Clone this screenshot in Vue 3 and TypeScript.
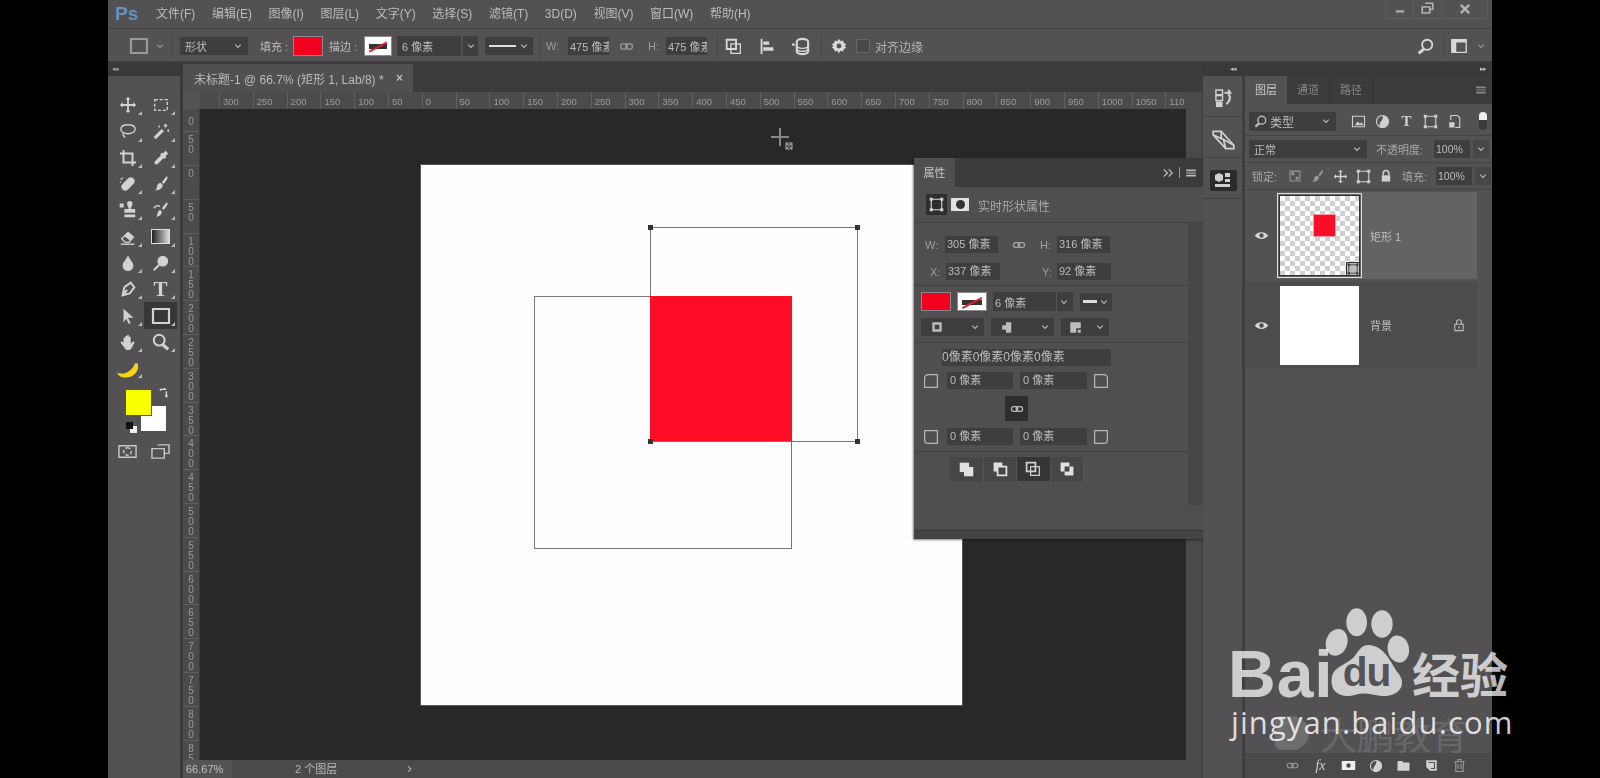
<script setup lang="ts">
import { h } from 'vue'

type Part = [string, string?]
const I: Record<string, Part[]> = {
  move: [['M10 1l3 3h-2v5h5V7l3 3-3 3v-2h-5v5h2l-3 3-3-3h2v-5H4v2l-3-3 3-3v2h5V4H7z', 'f']],
  marquee: [['M3 4h14v12H3z', 'd']],
  lasso: [['M10 3c5 0 8 2 8 5s-4 5-8 5-8-2-8-5 3-5 8-5z M5 12c-1 2 0 4 2 5']],
  wand: [['M3 18L12 9', 'b'], ['M15 2v4M13 4h4M18 8v3M8 4v2', 's']],
  crop: [['M5 1v14h14 M1 5h14v14', 'm']],
  dropper: [['M15 2l3 3-3 3 1 1-2 2-1-1-7 7H3v-3l7-7-1-1 2-2 1 1z', 'f']],
  heal: [['M4 10l6-6a3.5 3.5 0 0 1 6 6l-6 6a3.5 3.5 0 0 1-6-6z', 'f'], ['M2 5l2-2M1 8h1', 's']],
  brush: [['M17 2c1 1 0 3-4 8l-2-2c4-5 5-7 6-6z M10 9l2 2c0 4-4 6-9 6 3-1 2-4 3-6 1-2 3-2 4-2z', 'f']],
  stamp: [['M9 3a3 3 0 0 1 6 0c0 3-2 4-2 6h5v4H6V9h5c0-2-2-3-2-6z M6 15h12v3H6z', 'f'], ['M1 3l4 4M5 3l-4 4', 'm']],
  hist: [['M17 2c1 1 0 3-4 8l-2-2c4-5 5-7 6-6z M9 10l2 2c0 3-3 5-6 6 1-3 1-7 4-8z', 'f'], ['M2 8c2-3 5-3 7-2', 's']],
  eraser: [['M3 12l7-7 6 5-5 6H7z', 's'], ['M10 5l6 5-4 4-6-5z', 'f'], ['M2 18h15', 's']],
  drop: [['M10 2c3 5 6 8 6 11a6 6 0 0 1-12 0c0-3 3-6 6-11z', 'f']],
  dodge: [['M12 2a6 6 0 1 1 0 12a6 6 0 1 1 0-12z', 'f'], ['M8 12L2 18', 'm']],
  pen: [['M4 17l2-9 7-5 4 5-5 7z M4 17l5-6', 'm']],
  arrow: [['M5 2l11 10h-6l3 6-2 1-3-6-3 4z', 'f']],
  rect: [['M2 3h16v14H2z', 'm']],
  hand: [['M5 11V6a1 1 0 0 1 2 0v3V4a1 1 0 0 1 2 0v5V3a1 1 0 0 1 2 0v6V5a1 1 0 0 1 2 0v7l2-2a1 1 0 0 1 2 1l-3 6-2 2H8l-3-4-3-4a1 1 0 0 1 2-1z', 'f']],
  zoom: [['M8 2a6 6 0 1 1 0 12a6 6 0 1 1 0-12z', 'm'], ['M12 13l6 5', 'b']],
  banana: [['M1 14c6 2 12-1 15-8l2 0c2 6-3 12-10 12-3 0-6-1-7-4z', 'f']],
  swap: [['M3 4h9l-2-2M3 4l2 2M14 7v9l-2-2m2 2l2-2', 'm']],
  mask: [['M1 4h18v12H1z', 's'], ['M10 6a4 4 0 1 1 0 8a4 4 0 1 1 0-8z', 'd']],
  maskfill: [['M1 4h18v12H1z M10 7a3 3 0 1 0 0 6a3 3 0 0 0 0-6z', 'f']],
  screen: [['M7 3h12v9h-5 M1 7h13v10H1z', 's']],
  chev: [['M6 8l4 4 4-4', 's']],
  link: [['M8 7H6a3 3 0 0 0 0 6h2a3 3 0 0 0 0-6z M14 7h-2a3 3 0 0 0 0 6h2a3 3 0 0 0 0-6z', 's']],
  combine: [['M2 2h11v11H2z', 'm'], ['M7 7h11v11H7z', 's']],
  align: [['M3 1v18', 'm'], ['M5 4h7v4H5z M5 11h12v4H5z', 'f']],
  stack: [['M5 5a6 3 0 0 1 12 0v10a6 3 0 0 1-12 0z', 'm'], ['M5 9a6 3 0 0 0 12 0M5 12a6 3 0 0 0 12 0', 's'], ['M0 8h3', 'm']],
  gear: [['M10 1l2 3 3-1 1 3 3 2-2 2 2 2-3 2-1 3-3-1-2 3-2-3-3 1-1-3-3-2 2-2-2-2 3-2 1-3 3 1z M10 7a3 3 0 1 0 0 6a3 3 0 0 0 0-6z', 'f']],
  search: [['M12 2a6 6 0 1 1 0 12a6 6 0 1 1 0-12z', 'm'], ['M8 13l-6 5', 'b']],
  panel: [['M2 3h16v14H2z', 's'], ['M2 3h16v3H2z M2 6h5v11H2z', 'f']],
  min: [['M4 12h12v3H4z', 'f']],
  restore: [['M7 3h10v8h-3 M3 8h10v8H3z', 'm']],
  close: [['M4 4l12 12M16 4L4 16', 'b']],
  history: [['M2 1h7v5H2z M2 7h7v5H2z', 's'], ['M2 13h7v6H2z', 'f'], ['M11 4h6l-2-3 M15 5c3 3 2 8-2 11', 'm']],
  swatches: [['M1 3h7l11 12v3h-7L1 6z', 's'], ['M8 3v7M12 18l-2-8M1 6l9 4 9 5', 's']],
  shapes: [['M2 5l4-2 4 2v5l-4 2-4-2z', 'f'], ['M12 3h5v4h-5z M12 9h5v3h-5z M2 14h15v3H2z', 'f']],
  img: [['M2 3h16v14H2z', 's'], ['M5 15l4-5 3 3 2-2 3 4z', 'f']],
  adj: [['M10 2a8 8 0 1 1 0 16a8 8 0 1 1 0-16z', 's'], ['M10 2a8 8 0 0 1 0 16c-3 0-6-3-2-8s2-8 2-8z', 'f']],
  tf: [['M3 3h14v14H3z', 's'], ['M1 1h4v4H1z M15 1h4v4h-4z M1 15h4v4H1z M15 15h4v4h-4z', 'f']],
  smart: [['M5 8V2h9l3 3v13h-6', 's'], ['M3 11h7v7H3z', 'f']],
  lockc: [['M3 3h14v14H3z', 's'], ['M5 5h4v4H5z M11 11h4v4h-4z', 'f']],
  lock: [['M6 9V6a4 4 0 0 1 8 0v3', 'm'], ['M4 9h12v9H4z', 'f']],
  lockl: [['M6.5 9V6a3.5 3.5 0 0 1 7 0v3 M4 9h12v9H4z', 's'], ['M9 12h2v3H9z', 'f']],
  eye: [['M1 10c4-6 14-6 18 0-4 6-14 6-18 0z M10 7a3 3 0 1 0 0 6a3 3 0 0 0 0-6z', 'f']],
  capa: [['M5 5h10v10H5z', 'b']],
  capb: [['M8 3h7v14H8z', 'f'], ['M3 7h6v6H3z', 'f']],
  capc: [['M3 3h14v8h-6v6H3z', 'f'], ['M13 13h4v4h-4z', 'f']],
  corner1: [['M7 2h11v16H2V7q0-5 5-5z', 's']],
  corner2: [['M2 2h11q5 0 5 5v11H2z', 's']],
  corner3: [['M2 2h16v16H7q-5 0-5-5z', 's']],
  corner4: [['M2 2h16v11q0 5-5 5H2z', 's']],
  unite: [['M2 2h11v11H2z', 'f'], ['M7 7h11v11H7z', 'f']],
  sub: [['M2 2h11v5H7v6H2z', 'f'], ['M7 7h11v11H7z', 'm']],
  excl: [['M2 2h11v5H7v6H2z M13 7h5v11H7v-5h6z', 'f']],
  menu: [['M2 4h16v3H2z M2 9h16v2H2z M2 13h16v3H2z', 'f']],
  folder: [['M2 4h6l2 2h8v11H2z', 'f']],
  newl: [['M3 3h14v14H8l-5-5z', 'f'], ['M6 6h8v8H9', 'x']],
  trash: [['M3 5h14 M5 5v13h10V5 M8 5V2h4v3 M8 8v7M12 8v7', 's']],
  double: [['M3 4l6 6-6 6M11 4l6 6-6 6', 'm']],
}

const Ic = (p: { n: string; s?: number }) =>
  h(
    'svg',
    { viewBox: '0 0 20 20', width: p.s ?? 20, height: p.s ?? 20, style: 'display:block;flex:none' },
    (I[p.n] ?? []).map(([d, m]) => {
      const mode = m ?? 's'
      if (mode === 'f') return h('path', { d, fill: 'currentColor', 'fill-rule': 'evenodd' })
      return h('path', {
        d,
        fill: 'none',
        stroke: mode === 'x' ? '#555355' : 'currentColor',
        'stroke-width': mode === 'b' ? 3.4 : mode === 'm' ? 2.2 : 1.5,
        'stroke-dasharray': mode === 'd' ? '3.5 2' : undefined,
      })
    }),
  )

const menus = ['文件(F)', '编辑(E)', '图像(I)', '图层(L)', '文字(Y)', '选择(S)', '滤镜(T)', '3D(D)', '视图(V)', '窗口(W)', '帮助(H)']
const tools = ['move', 'marquee', 'lasso', 'wand', 'crop', 'dropper', 'heal', 'brush', 'stamp', 'hist', 'eraser', 'gradient', 'drop', 'dodge', 'pen', 'type', 'arrow', 'rect', 'hand', 'zoom']
const hTicks = [300, 250, 200, 150, 100, 50, 0, 50, 100, 150, 200, 250, 300, 350, 400, 450, 500, 550, 600, 650, 700, 750, 800, 850, 900, 950, 1000, 1050, 110]
const vTicks = [0, 50, 0, 50, 100, 150, 200, 250, 300, 350, 400, 450, 500, 550, 600, 650, 700, 750, 800, 85]
const digits = (n: number) => String(n).split('')
</script>

<template>
  <div class="app">
    <div class="window">
      <header class="menubar">
        <span class="logo">Ps</span>
        <nav class="menus"><span v-for="m in menus" :key="m">{{ m }}</span></nav>
        <div class="winctl">
          <span><Ic n="min" :s="14" /></span>
          <span><Ic n="restore" :s="15" /></span>
          <span class="closebtn"><Ic n="close" :s="14" /></span>
        </div>
      </header>

      <div class="options">
        <div class="o-shape"><Ic n="rect" :s="20" class="dim" /><Ic n="chev" :s="14" class="dim" /></div>
        <i class="o-sep sep1"></i>
        <div class="field o-mode"><span>形状</span><Ic n="chev" :s="14" /></div>
        <label class="o-l1">填充 :</label>
        <span class="swatch red o-fill"></span>
        <label class="o-l2">描边 :</label>
        <span class="swatch stroke o-stroke"><b></b></span>
        <div class="field o-size"><span>6 像素</span></div>
        <div class="field o-arrow"><Ic n="chev" :s="14" /></div>
        <div class="field o-line"><i class="dash"></i><Ic n="chev" :s="14" /></div>
        <i class="o-sep sep2"></i>
        <label class="o-l3">W:</label>
        <div class="field o-num"><span>475 像素</span></div>
        <Ic n="link" :s="17" class="o-link" />
        <label class="o-l4">H:</label>
        <div class="field o-num"><span>475 像素</span></div>
        <i class="o-sep sep3"></i>
        <Ic n="combine" :s="17" class="o-i1 lit" />
        <Ic n="align" :s="17" class="o-i2 lit" />
        <Ic n="stack" :s="19" class="o-i3 lit" />
        <i class="o-sep sep4"></i>
        <Ic n="gear" :s="16" class="o-i4 lit" />
        <span class="check"></span>
        <span class="o-edge">对齐边缘</span>
        <Ic n="search" :s="17" class="o-search lit" />
        <i class="o-sep sep5"></i>
        <Ic n="panel" :s="18" class="lit" />
        <Ic n="chev" :s="14" class="o-last dim" />
      </div>

      <div class="main">
        <aside class="tools">
          <div class="strip"><em>◂◂</em></div>
          <div class="toolgrid">
            <div v-for="t in tools" :key="t" class="tool" :class="{ active: t === 'rect' }">
              <i v-if="t === 'gradient'" class="gradbox"></i>
              <span v-else-if="t === 'type'" class="ttool">T</span>
              <Ic v-else :n="t" :s="t === 'rect' ? 20 : 18" />
            </div>
            <div class="tool banana"><Ic n="banana" :s="24" /></div>
          </div>
          <div class="colors">
            <span class="bgc"></span>
            <span class="fgc"></span>
            <Ic n="swap" :s="12" class="swapi" />
            <span class="mini"><i></i><b></b></span>
          </div>
          <div class="modes"><Ic n="mask" :s="19" /><Ic n="screen" :s="19" /></div>
        </aside>
        <div class="gutter"></div>

        <section class="doc">
          <div class="tabrow">
            <div class="doctab"><span>未标题-1 @ 66.7% (矩形 1, Lab/8) *</span><b>×</b></div>
          </div>
          <div class="docbody">
            <div class="docmain">
              <div class="hruler">
                <div class="corner"></div>
                <div class="hticks">
                  <span v-for="(t, i) in hTicks" :key="i" class="ht">{{ t }}</span>
                </div>
              </div>
              <div class="mid">
                <div class="vruler">
                  <div class="vt" v-for="(t, i) in vTicks" :key="i">
                    <span v-for="(d, j) in digits(t)" :key="j">{{ d }}</span>
                  </div>
                </div>
                <div class="canvas">
                  <div class="page">
                    <svg width="541" height="540" viewBox="0 0 541 540" class="shapes">
                      <rect x="113.500" y="131.500" width="257" height="252" fill="none" stroke="#777" />
                      <rect x="229.500" y="62.500" width="207" height="214" fill="none" stroke="#777" />
                      <rect x="229" y="131" width="142" height="145" fill="#fe0c26" />
                      <g fill="#333">
                        <rect x="227" y="60" width="5" height="5" />
                        <rect x="434" y="60" width="5" height="5" />
                        <rect x="227" y="274" width="5" height="5" />
                        <rect x="434" y="274" width="5" height="5" />
                      </g>
                    </svg>
                  </div>
                  <svg class="cursor" width="26" height="26" viewBox="0 0 26 26">
                    <path d="M10 1v18M1 10h18" stroke="#888" stroke-width="2" fill="none" />
                    <path d="M16 16h6v6h-6z M16 16l6 6M22 16l-6 6" stroke="#999" stroke-width="1.2" fill="none" />
                  </svg>
                </div>
              </div>
              <footer class="status">
                <span class="st-zoom">66.67%</span>
                <span class="st-info"><em>2 个图层</em><b>›</b></span>
              </footer>
            </div>
            <div class="vscroll"></div>
          </div>
        </section>

        <aside class="dock">
          <div class="dockhead"><em>◂◂</em><em class="r">▸▸</em></div>
          <div class="dockbody">
            <div class="iconcol">
              <div class="dbtn"><Ic n="history" :s="19" /></div>
              <div class="dbtn"><Ic n="swatches" :s="23" /></div>
              <div class="dbtn"><span class="dsel"><Ic n="shapes" :s="20" /></span></div>
            </div>
            <div class="divider"></div>
            <div class="layers">
              <div class="ltabs">
                <span class="ltab on">图层</span>
                <span class="ltab">通道</span>
                <span class="ltab">路径</span>
                <Ic n="menu" :s="12" class="lmenu" />
              </div>
              <div class="lrow filter">
                <div class="field fsel"><span class="fq"><Ic n="search" :s="13" /><b>类型</b></span><Ic n="chev" :s="14" /></div>
                <div class="ficons">
                  <Ic n="img" :s="15" /><Ic n="adj" :s="15" />
                  <span class="tsmall">T</span><Ic n="tf" :s="15" /><Ic n="smart" :s="15" />
                </div>
                <span class="toggle"></span>
              </div>
              <div class="lrow blend">
                <div class="field bsel"><span>正常</span><Ic n="chev" :s="14" /></div>
                <span class="lab">不透明度:</span>
                <div class="field pct">100%</div>
                <div class="field parr"><Ic n="chev" :s="14" /></div>
              </div>
              <div class="lrow lockrow">
                <span class="lab lk">锁定:</span>
                <div class="licons">
                  <Ic n="lockc" :s="14" class="dim" /><Ic n="brush" :s="15" class="dim" /><Ic n="move" :s="15" /><Ic n="tf" :s="15" /><Ic n="lock" :s="14" />
                </div>
                <span class="lab fl">填充:</span>
                <div class="field pct">100%</div>
                <div class="field parr"><Ic n="chev" :s="14" /></div>
              </div>
              <div class="layer sel">
                <span class="eye"><Ic n="eye" :s="15" /></span>
                <div class="thumbframe">
                  <div class="checker"><i class="tred"></i><span class="tbadge"><Ic n="tf" :s="12" /></span></div>
                </div>
                <span class="lname">矩形 1</span>
              </div>
              <div class="layer bgl">
                <span class="eye"><Ic n="eye" :s="15" /></span>
                <div class="thumbwhite"></div>
                <span class="lname">背景</span>
                <Ic n="lockl" :s="14" class="bglock" />
              </div>
              <div class="lfill"></div>
              <div class="lfoot">
                <Ic n="link" :s="15" class="dim" />
                <span class="fx">fx</span>
                <Ic n="maskfill" :s="15" class="solidmask" />
                <Ic n="adj" :s="14" />
                <Ic n="folder" :s="15" />
                <Ic n="newl" :s="15" />
                <Ic n="trash" :s="15" class="dim" />
              </div>
            </div>
          </div>
        </aside>
      </div>

      <div class="props">
        <div class="p-tabs">
          <span class="p-tab">属性</span>
          <div class="p-tools"><Ic n="double" :s="12" /><i></i><Ic n="menu" :s="12" /></div>
        </div>
        <div class="p-head">
          <span class="p-btn"><Ic n="tf" :s="15" /></span>
          <span class="p-mask"><i></i></span>
          <span class="p-title">实时形状属性</span>
        </div>
        <div class="p-body">
          <div class="p-content">
            <div class="sec sa">
              <div class="row r1">
                <label class="lw">W:</label><span class="inp w53">305 像素</span>
                <span class="plink"><Ic n="link" :s="16" /></span>
                <label class="lh">H:</label><span class="inp w53">316 像素</span>
              </div>
              <div class="row r2">
                <label class="lx">X:</label><span class="inp w54">337 像素</span>
                <label class="ly">Y:</label><span class="inp w54">92 像素</span>
              </div>
            </div>
            <div class="sec sb">
              <div class="row c1">
                <span class="swatch red s30"></span>
                <span class="swatch stroke s30"><b></b></span>
                <div class="field psize"><span>6 像素</span><i class="vsep"></i><Ic n="chev" :s="14" /></div>
                <div class="field pline"><i class="dash short"></i><Ic n="chev" :s="14" /></div>
              </div>
              <div class="row c2">
                <div class="field w63"><Ic n="capa" :s="14" /><Ic n="chev" :s="14" /></div>
                <div class="field w63"><Ic n="capb" :s="15" /><Ic n="chev" :s="14" /></div>
                <div class="field w48"><Ic n="capc" :s="15" /><Ic n="chev" :s="14" /></div>
              </div>
            </div>
            <div class="sec sc">
              <div class="inp allr">0像素0像素0像素0像素</div>
              <div class="row corners">
                <Ic n="corner1" :s="16" /><span class="inp w66">0 像素</span><span class="inp w67">0 像素</span><Ic n="corner2" :s="16" />
              </div>
              <span class="clink"><Ic n="link" :s="16" /></span>
              <div class="row corners last">
                <Ic n="corner3" :s="16" /><span class="inp w66">0 像素</span><span class="inp w67">0 像素</span><Ic n="corner4" :s="16" />
              </div>
            </div>
            <div class="sec sd">
              <div class="seg">
                <span><Ic n="unite" :s="17" /></span>
                <span><Ic n="sub" :s="16" /></span>
                <span class="on"><Ic n="combine" :s="16" /></span>
                <span><Ic n="excl" :s="16" /></span>
              </div>
            </div>
          </div>
          <div class="p-scroll"></div>
        </div>
        <div class="p-grip"></div>
      </div>
    </div>

    <div class="wm">
      <svg width="320" height="188" viewBox="0 0 960 564" class="paw">
        <g fill="#fff" fill-opacity=".72">
          <ellipse cx="470" cy="97" rx="31" ry="42" />
          <ellipse cx="546" cy="102" rx="32" ry="41" />
          <ellipse cx="410" cy="157" rx="32" ry="41" transform="rotate(18 410 157)" />
          <ellipse cx="595" cy="177" rx="32" ry="41" transform="rotate(-10 595 177)" />
          <path d="M505 165C555 165 575 225 595 250C625 290 590 322 545 318C515 315 495 305 465 315C425 325 390 310 395 265C400 225 450 225 470 190C480 175 490 165 505 165Z" />
        </g>
        <text x="428" y="289" class="du">du</text>
      </svg>
      <span class="bai">Bai</span>
      <span class="jy">经验</span>
      <span class="logo2"></span>
      <span class="dp">大鹏教育</span>
      <span class="url">jingyan.baidu.com</span>
    </div>
  </div>
</template>

<style>
html, body { margin: 0; background: #000; overflow: hidden; }
</style>

<style scoped>
.app { position: relative; width: 1600px; height: 778px; padding-left: 108px; box-sizing: border-box; background: #000; overflow: hidden; font-family: "Liberation Sans", "Noto Sans CJK SC", sans-serif; color: #bebcbe; font-size: 11px; }
.window { position: relative; width: 1384px; height: 778px; background: #535153; filter: blur(.55px); }
.dim { color: #9a989a; }
.lit { color: #d8d8d8; }

/* menu */
.menubar { display: flex; align-items: center; height: 28px; border-bottom: 1px solid #444244; padding-left: 7px; }
.logo { width: 41px; color: #6394c0; font-weight: 700; font-size: 19px; }
.menus { display: flex; gap: 16.6px; font-size: 12px; line-height: 16px; color: #bdbbbd; }
.winctl { margin-left: auto; margin-right: 4px; margin-top: -10px; display: flex; height: 18px; border: 1px solid #5d5b5d; border-top: 0; color: #b4b2b4; }
.winctl span { width: 27px; display: flex; align-items: center; justify-content: center; border-right: 1px solid #5d5b5d; }
.winctl .closebtn { width: 45px; border: 0; }

/* options */
.options { display: flex; align-items: center; height: 30px; padding: 2px 0 0 21px; border-bottom: 1px solid #444244; }
.o-shape { display: flex; align-items: center; gap: 4px; }
.o-sep { width: 1px; height: 24px; background: #484648; flex: none; }
.sep1 { margin-left: 4px; }
.field { display: flex; align-items: center; justify-content: space-between; background: #3f3d3f; color: #bdbbbd; box-sizing: border-box; padding: 0 3px 0 5px; flex: none; font-size: 11px; white-space: nowrap; overflow: hidden; }
.o-mode { margin-left: 8px; width: 68px; height: 18px; }
.o-l1 { margin-left: 12px; width: 33px; }
.swatch { display: block; flex: none; box-sizing: border-box; border: 1px solid #8a888a; }
.red { background: #f4001f; }
.stroke { position: relative; background: #fff; }
.stroke b { position: absolute; left: 4px; right: 4px; top: 50%; height: 5px; margin-top: -2px; background: #333; }
.stroke::after { content: ""; position: absolute; left: 3px; right: 3px; top: 50%; height: 1.5px; background: #e02030; transform: rotate(-28deg); }
.o-fill { width: 30px; height: 20px; }
.o-l2 { margin-left: 6px; width: 35px; }
.o-stroke { width: 28px; height: 20px; }
.o-size { margin-left: 5px; width: 64px; height: 20px; }
.o-arrow { margin-left: 2px; width: 15px; height: 20px; padding: 0; justify-content: center; }
.o-line { margin-left: 7px; width: 48px; height: 18px; padding: 0 2px 0 4px; }
.dash { display: block; width: 27px; height: 2px; background: #ddd; }
.dash.short { width: 14px; height: 2.5px; }
.sep2 { margin-left: 6px; }
.o-l3 { margin-left: 6px; width: 22px; color: #9e9c9e; }
.o-num { width: 41px; height: 18px; padding: 0 0 0 2px; justify-content: flex-start; }
.o-link { margin-left: 9px; color: #9a989a; }
.o-l4 { margin-left: 13px; width: 18px; color: #9e9c9e; }
.sep3 { margin-left: 10px; }
.o-i1 { margin-left: 7px; }
.o-i2 { margin-left: 17px; }
.o-i3 { margin-left: 16px; }
.sep4 { margin-left: 10px; }
.o-i4 { margin-left: 9px; }
.check { width: 12px; height: 12px; margin-left: 9px; border: 1px solid #6a686a; background: #4a484a; border-radius: 1px; flex: none; }
.o-edge { margin-left: 5px; font-size: 12px; color: #b4b2b4; }
.o-search { margin-left: 494px; }
.sep5 { margin-left: 9px; margin-right: 6px; }
.o-last { margin-left: 6px; }

/* main */
.main { display: flex; height: 716px; }
.tools { width: 72px; flex: none; background: #535153; }
.strip { height: 14px; background: #3a383a; color: #a0a0a0; font-size: 7px; line-height: 14px; padding-left: 4px; }
.strip em, .dockhead em { font-style: normal; font-size: 7px; letter-spacing: -1px; }
.toolgrid { display: grid; grid-template-columns: 33px 33px; grid-auto-rows: 26.3px; padding: 16px 0 0 3px; }
.tool { position: relative; display: flex; align-items: center; justify-content: center; color: #d2d2d2; }
.tool::after { content: ""; position: absolute; right: 2px; bottom: 3px; border: 2px solid transparent; border-right-color: #bbb; border-bottom-color: #bbb; }
.tool.active { background: #383638; }
.tool.banana { color: #f3d516; }
.gradbox { display: block; width: 17px; height: 13px; border: 1.5px solid #ddd; background: linear-gradient(90deg, #222, #ddd); }
.ttool { font-family: "Liberation Serif", serif; font-weight: 700; font-size: 21px; line-height: 1; }
.colors { position: relative; height: 56px; margin-top: 4px; }
.fgc { position: absolute; left: 18px; top: 5px; width: 25px; height: 25px; background: #f8ff00; box-shadow: 0 0 0 1px #555; }
.bgc { position: absolute; left: 33px; top: 21px; width: 25px; height: 25px; background: #fff; }
.swapi { position: absolute; left: 50px; top: 2px; color: #ddd; }
.mini { position: absolute; left: 18px; top: 37px; }
.mini b { position: absolute; left: 4px; top: 4px; width: 7px; height: 7px; background: #eee; }
.mini i { position: absolute; left: 0; top: 0; width: 7px; height: 7px; background: #111; z-index: 1; }
.modes { display: flex; gap: 14px; padding: 1px 0 0 10px; color: #c8c8c8; }
.gutter { width: 3px; flex: none; background: #3a383a; }
.doc { width: 1020px; flex: none; display: flex; flex-direction: column; min-width: 0; }
.tabrow { height: 30px; flex: none; background: #3c3a3c; display: flex; align-items: flex-end; }
.doctab { display: flex; align-items: center; justify-content: space-between; box-sizing: border-box; width: 230px; height: 28px; padding: 0 10px 0 11px; background: #514f51; font-size: 12px; color: #bdbbbd; white-space: nowrap; }
.docbody { flex: 1; display: flex; min-height: 0; }
.docmain { width: 1003px; flex: none; display: flex; flex-direction: column; min-width: 0; }
.vscroll { flex: 1; background: #4b494b; border-right: 1px solid #3c3a3c; }
.hruler { display: flex; height: 17px; flex: none; background: #4c4a4c; }
.corner { width: 17px; flex: none; background: #555355; }
.hticks { flex: 1; display: flex; padding-left: 19px; overflow: hidden; min-width: 0; }
.ht { flex: none; width: 33.8px; box-sizing: border-box; border-left: 1px solid #616061; padding-left: 3px; font-size: 9.5px; line-height: 20px; color: #9c9a9c; }
.mid { flex: 1; display: flex; min-height: 0; }
.vruler { width: 17px; flex: none; background: #4c4a4c; overflow: hidden; border-right: 1px solid #3c3a3c; box-sizing: border-box; }
.vt { height: 33.8px; box-sizing: border-box; display: flex; flex-direction: column; align-items: center; border-top: 1px solid #616061; padding-top: 3px; font-size: 10px; line-height: 10px; color: #9c9a9c; }
.vt:first-child { margin-top: -11.6px; padding-top: 19px; }
.canvas { position: relative; flex: 1; min-width: 0; background: #282729; box-sizing: border-box; padding: 56px 0 0 221px; overflow: hidden; }
.page { width: 541px; height: 540px; background: #fffdff; box-shadow: 0 0 0 1px #555; }
.shapes { display: block; }
.cursor { position: absolute; left: 570px; top: 18px; }
.status { display: flex; height: 18px; flex: none; background: #4b494b; font-size: 11px; }
.st-zoom { width: 49px; box-sizing: border-box; padding-left: 3px; background: #555355; line-height: 18px; color: #c0bec0; }
.st-info { width: 185px; display: flex; justify-content: space-between; box-sizing: border-box; padding: 0 5px 0 63px; line-height: 18px; color: #b8b6b8; }
.st-info em { font-style: normal; }
.st-info b { font-weight: 400; font-size: 15px; line-height: 16px; }

/* dock */
.dock { flex: 1; display: flex; flex-direction: column; min-width: 0; }
.dockhead { display: flex; justify-content: space-between; height: 14px; flex: none; background: #3a383a; line-height: 14px; padding: 0 6px 0 27px; color: #bbb; }
.dockbody { flex: 1; display: flex; min-height: 0; }
.iconcol { width: 38px; flex: none; margin-left: 1px; }
.dbtn { height: 41px; padding-top: 4px; display: flex; align-items: center; justify-content: center; border-bottom: 1px solid #444244; color: #d0d0d0; box-sizing: border-box; }
.dsel { display: flex; align-items: center; justify-content: center; width: 27px; height: 21px; background: #2c2a2c; border-radius: 2px; }
.divider { width: 3px; flex: none; background: #3f3d3f; }
.layers { flex: 1; display: flex; flex-direction: column; min-width: 0; }
.ltabs { display: flex; align-items: center; height: 28px; flex: none; background: #3c3a3c; position: relative; }
.ltab { width: 42px; height: 28px; line-height: 28px; text-align: center; color: #8a888a; font-size: 11px; border-right: 1px solid #333133; }
.ltab.on { background: #535153; color: #c8c6c8; border: 0; }
.lmenu { margin-left: auto; margin-right: 5px; color: #8a888a; }
.lrow { display: flex; align-items: center; flex: none; border-bottom: 1px solid #444244; }
.filter { height: 28px; padding: 3px 0 0 4px; }
.fsel { width: 87px; height: 19px; }
.fq { display: flex; align-items: center; gap: 3px; }
.fq b { font-weight: 400; font-size: 12px; }
.ficons { display: flex; align-items: center; gap: 9px; margin-left: 15px; color: #d0d0d0; }
.tsmall { font-family: "Liberation Serif", serif; font-weight: 700; font-size: 15px; line-height: 1; width: 15px; text-align: center; }
.toggle { margin-left: 17px; width: 8px; height: 18px; border-radius: 4px; background: linear-gradient(#eee 0 8px, #3a383a 8px); flex: none; }
.blend { height: 26px; padding-left: 4px; }
.bsel { width: 118px; height: 18px; }
.lab { color: #aaa8aa; font-size: 11px; white-space: nowrap; }
.blend .lab { margin-left: 9px; width: 58px; }
.pct { width: 36px; height: 18px; padding: 0 0 0 2px; font-size: 10.5px; }
.parr { width: 16px; height: 18px; margin-left: 3px; padding: 0; justify-content: center; background: #484648; }
.lockrow { height: 26px; padding-left: 7px; }
.lk { width: 34px; }
.licons { display: flex; align-items: center; gap: 8px; color: #d0d0d0; width: 114px; padding-left: 2px; }
.fl { width: 34px; }
.layer { position: relative; display: flex; align-items: center; margin-right: 15px; flex: none; box-sizing: border-box; }
.eye { width: 32px; flex: none; display: flex; justify-content: center; color: #d8d8d8; }
.layer.sel { height: 87px; margin-top: 2px; background: linear-gradient(90deg, transparent 32px, #646264 32px); }
.thumbframe { width: 85px; height: 85px; box-sizing: border-box; border: 1px solid #ddd; padding: 1px; flex: none; }
.checker { position: relative; width: 81px; height: 81px; box-sizing: border-box; border: 1px solid #333; background: repeating-conic-gradient(#cfcfcf 0 25%, #fff 0 50%) 0 0 / 10px 10px; }
.tred { position: absolute; left: 34px; top: 19px; width: 21px; height: 21px; background: #f80c28; box-shadow: 0 0 0 1px #ff9aa4; }
.tbadge { position: absolute; right: -1px; bottom: -1px; width: 14px; height: 14px; display: flex; align-items: center; justify-content: center; background: #bbb; border: 1px solid #333; box-sizing: border-box; color: #444; }
.lname { margin-left: 8px; color: #c0bec0; font-size: 11px; }
.bgl { height: 86px; margin-top: 3px; background: #4d4b4d; padding-left: 0; }
.thumbwhite { width: 79px; height: 79px; margin-left: 3px; margin-right: 3px; background: #fff; flex: none; }
.bglock { position: absolute; left: 207px; top: 36px; color: #c0bec0; }
.lfill { flex: 1; }
.lfoot { display: flex; align-items: center; height: 25px; flex: none; background: #4b494b; padding-left: 40px; gap: 13px; color: #d2d2d2; }
.fx { font-family: "Liberation Serif", serif; font-style: italic; font-size: 14px; width: 15px; text-align: center; }
.solidmask { color: #eee; }

/* properties */
.props { position: absolute; left: 806px; top: 158px; width: 289px; height: 381px; background: #504e50; box-shadow: -1px 1px 2px rgba(0, 0, 0, .5); display: flex; flex-direction: column; z-index: 2; }
.p-tabs { display: flex; align-items: center; justify-content: space-between; height: 29px; flex: none; background: #3c3a3c; }
.p-tab { width: 41px; height: 29px; line-height: 31px; text-align: center; background: #504e50; color: #c8c6c8; font-size: 11px; }
.p-tools { display: flex; align-items: center; gap: 5px; padding-right: 6px; color: #bbb; }
.p-tools i { display: block; width: 1px; height: 11px; background: #999; }
.p-head { display: flex; align-items: center; height: 36px; flex: none; padding-left: 12px; border-bottom: 1px solid #424042; box-sizing: border-box; }
.p-btn { width: 21px; height: 21px; display: flex; align-items: center; justify-content: center; background: #2f2d2f; color: #d5d5d5; }
.p-mask { position: relative; width: 18px; height: 13px; margin-left: 4px; background: #e2e2e2; }
.p-mask i { position: absolute; left: 5px; top: 2px; width: 9px; height: 9px; border-radius: 50%; background: #333; }
.p-title { margin-left: 9px; margin-top: 2px; font-size: 12px; color: #aaa8aa; }
.p-body { display: flex; flex: 1; min-height: 0; }
.p-content { width: 274px; flex: none; }
.p-scroll { width: 15px; height: 282px; background: #474547; }
.sec { box-sizing: border-box; border-bottom: 1px solid #424042; }
.sec:last-child { border: 0; }
.row { display: flex; align-items: center; }
.inp { display: block; flex: none; background: #3f3d3f; color: #bdbbbd; font-size: 11px; line-height: 17px; height: 17px; padding-left: 2px; box-sizing: border-box; white-space: nowrap; overflow: hidden; }
.w53 { width: 53px; }
.w54 { width: 54px; }
.sa { height: 63px; padding-top: 13px; }
.r1 { height: 17px; }
.r2 { height: 17px; margin-top: 10px; }
.lw { width: 31px; padding-left: 11px; box-sizing: border-box; color: #9e9c9e; }
.lx { width: 32px; padding-left: 16px; box-sizing: border-box; color: #9e9c9e; }
.plink { width: 42px; display: flex; justify-content: center; color: #a8a6a8; }
.lh { width: 17px; color: #9e9c9e; }
.ly { width: 57px; padding-left: 42px; box-sizing: border-box; color: #9e9c9e; }
.sb { height: 57px; padding: 6px 0 0 7px; }
.c1 { gap: 6px; height: 19px; }
.s30 { width: 30px; height: 19px; }
.psize { width: 80px; height: 19px; margin-left: 0; padding: 0 2px 0 2px; }
.psize span { width: 62px; }
.vsep { display: block; width: 1px; height: 19px; background: #555; }
.pline { width: 32px; height: 18px; margin-left: 1px; padding: 0 1px 0 3px; }
.c2 { gap: 7px; margin-top: 7px; }
.w63 { width: 63px; height: 18px; padding: 0 2px 0 9px; }
.w48 { width: 48px; height: 18px; padding: 0 2px 0 7px; }
.sc { height: 109px; padding-top: 6px; }
.allr { width: 169px; margin-left: 28px; height: 17px; padding-left: 0; font-size: 12px; }
.corners { margin-top: 6px; padding-left: 9px; color: #b8b6b8; height: 17px; }
.w66 { width: 66px; margin-left: 8px; padding-left: 3px; }
.w67 { width: 67px; margin-left: 7px; margin-right: 6px; padding-left: 3px; }
.clink { display: flex; align-items: center; justify-content: center; width: 23px; height: 25px; margin: 7px 0 7px 91px; background: #2f2d2f; color: #bbb; }
.corners.last { margin-top: 0; }
.sd { padding: 5px 0 0 36px; }
.seg { display: flex; }
.seg span { width: 33.5px; height: 24px; display: flex; align-items: center; justify-content: center; background: #474547; color: #e0e0e0; border-right: 1px solid #555355; box-sizing: border-box; }
.seg .on { background: #363436; color: #cfcfcf; }
.p-grip { height: 9px; flex: none; background: #454345; border-top: 1px solid #3a383a; box-sizing: border-box; }

/* watermark */
.wm { position: absolute; left: 1200px; top: 590px; width: 400px; height: 188px; pointer-events: none; z-index: 5; }
.paw { position: absolute; left: 0; top: 0; }
.du { font-family: "Liberation Sans", sans-serif; font-weight: 700; font-size: 122px; fill: #555355; letter-spacing: -3px; }
.bai { position: absolute; left: 28px; top: 49px; font-weight: 700; font-size: 66px; line-height: 70px; letter-spacing: 1px; color: rgba(255, 255, 255, .72); }
.jy { position: absolute; left: 212px; top: 54px; font-family: "Noto Sans CJK SC", sans-serif; font-weight: 700; font-size: 48px; line-height: 56px; color: rgba(255, 255, 255, .72); }
.url { position: absolute; left: 31px; top: 112px; font-family: "Open Sans", sans-serif; font-size: 31px; line-height: 40px; letter-spacing: 1.1px; color: rgba(255, 255, 255, .82); white-space: nowrap; }
.dp { position: absolute; left: 120px; top: 122px; font-family: "Noto Sans CJK SC", sans-serif; font-size: 37px; line-height: 44px; color: rgba(255, 255, 255, .14); white-space: nowrap; }
.logo2 { position: absolute; left: 75px; top: 126px; width: 34px; height: 34px; border-radius: 6px 50% 50% 6px; background: rgba(255, 255, 255, .16); }
</style>
